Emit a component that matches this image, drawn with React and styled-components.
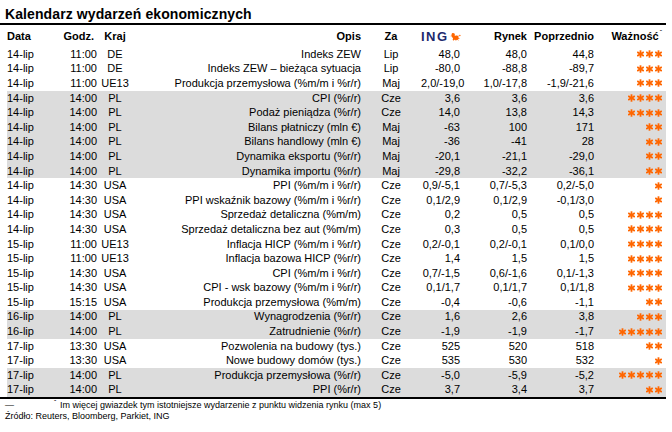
import React from "react";
import styled, { createGlobalStyle } from "styled-components";

const Global = createGlobalStyle`
  html, body { margin: 0; padding: 0; background: #ffffff; }
  body { font-family: "Liberation Sans", Arial, sans-serif; color: #000; }
`;

const Page = styled.div`
  width: 672px;
  height: 432px;
  overflow: hidden;
  background: #fff;
`;

const Title = styled.h1`
  margin: 0;
  padding: 6px 0 0 5px;
  height: 17px;
  font-size: 14px;
  line-height: 16px;
  font-weight: 700;
  letter-spacing: 0.1px;
`;

const Rule = styled.div`
  width: 666px;
  height: 2px;
  background: #000;
`;

const cols = "53px 37px 36px 228px 60px 39px 67px 67px 68px 4px";

const HeadRow = styled.div`
  display: grid;
  grid-template-columns: ${cols};
  align-items: end;
  margin-left: 7px;
  width: 659px;
  height: 22px;
  box-sizing: border-box;
  padding-bottom: 4px;
  font-size: 11px;
  line-height: 13px;
  font-weight: 700;
`;

const Row = styled.div`
  display: grid;
  grid-template-columns: ${cols};
  align-items: center;
  margin-left: 7px;
  width: 659px;
  height: 14.6px;
  font-size: 11px;
  line-height: 13px;
  background: ${(p) => (p.$shade ? "#dcdcdc" : "transparent")};
`;

const Cell = styled.div`
  text-align: ${(p) => p.$align || "left"};
  padding-right: ${(p) => p.$pr || 0}px;
  white-space: nowrap;
`;

const Logo = styled.div`
  display: flex;
  justify-content: flex-end;
  align-items: center;
  gap: 1px;
  margin-right: -1px;
  margin-bottom: 0px;
`;

const LogoText = styled.span`
  color: #1d2a6d;
  font-family: "Liberation Sans", Arial, sans-serif;
  font-size: 13px;
  line-height: 12px;
  font-weight: 700;
  letter-spacing: 1.5px;
`;

const Sup = styled.sup`
  font-size: 7px;
  font-weight: 400;
  vertical-align: top;
  line-height: 6px;
  margin-left: 1px;
`;

const Stars = styled.div`
  display: flex;
  justify-content: flex-end;
  gap: 2px;
`;

const Footer = styled.div`
  padding: 1px 0 0 5px;
  font-size: 9px;
  line-height: 10px;
`;

const FootLine = styled.div`
  display: flex;
  align-items: baseline;
`;

const Dash = styled.span`
  width: 49px;
`;

const Mark = styled.span`
  font-size: 7px;
  width: 6px;
  position: relative;
  top: -3px;
`;

const Star = () => (
  <svg width="7" height="8" viewBox="0 0 7 8">
    <g stroke="#ff6600" strokeWidth="1.8" strokeLinecap="butt">
      <line x1="3.5" y1="0.3" x2="3.5" y2="7.7" />
      <line x1="0.2" y1="2.1" x2="6.8" y2="5.9" />
      <line x1="0.2" y1="5.9" x2="6.8" y2="2.1" />
    </g>
  </svg>
);

const Lion = () => (
  <svg width="19" height="13" viewBox="0 0 18 12">
    <g fill="#ff6600">
      <path d="M3 1.2c1.2-.9 3-.9 4 .2.9 1 .8 2.3.2 3.1l1.6.4c1.3-.8 2.8-.6 3.5.2l1-.8.6 1-.9.9c.6.6.9 1.4.7 2.1l1.6.9-.5.8-1.6-.5-.4 1.7 1.2 1.3H13l-1.1-1.4-2.2.3.8 1.1H8.9l-.9-1.2-2.1.1.8 1.1H5.1l-.9-1.5.6-2.2C3.7 7.5 3 6.7 2.8 5.6L1.3 6l-.3-1 1.8-.7C2.4 3.3 2.3 2 3 1.2z" />
      <circle cx="15.6" cy="4.4" r="1.1" />
    </g>
  </svg>
);

const rows = [
  ["14-lip", "11:00", "DE", "Indeks ZEW", "Lip", "48,0", "48,0", "44,8", 3, false],
  ["14-lip", "11:00", "DE", "Indeks ZEW – bieżąca sytuacja", "Lip", "-80,0", "-88,8", "-89,7", 3, false],
  ["14-lip", "11:00", "UE13", "Produkcja przemysłowa (%m/m i %r/r)", "Maj", "2,0/-19,0", "1,0/-17,8", "-1,9/-21,6", 3, false],
  ["14-lip", "14:00", "PL", "CPI (%r/r)", "Cze", "3,6", "3,6", "3,6", 4, true],
  ["14-lip", "14:00", "PL", "Podaż pieniądza (%r/r)", "Cze", "14,0", "13,8", "14,3", 4, true],
  ["14-lip", "14:00", "PL", "Bilans płatniczy (mln €)", "Maj", "-63", "100", "171", 2, true],
  ["14-lip", "14:00", "PL", "Bilans handlowy (mln €)", "Maj", "-36", "-41", "28", 2, true],
  ["14-lip", "14:00", "PL", "Dynamika eksportu (%r/r)", "Maj", "-20,1", "-21,1", "-29,0", 2, true],
  ["14-lip", "14:00", "PL", "Dynamika importu (%r/r)", "Maj", "-29,8", "-32,2", "-36,1", 2, true],
  ["14-lip", "14:30", "USA", "PPI (%m/m i %r/r)", "Cze", "0,9/-5,1", "0,7/-5,3", "0,2/-5,0", 1, false],
  ["14-lip", "14:30", "USA", "PPI wskaźnik bazowy (%m/m i %r/r)", "Cze", "0,1/2,9", "0,1/2,9", "-0,1/3,0", 1, false],
  ["14-lip", "14:30", "USA", "Sprzedaż detaliczna (%m/m)", "Cze", "0,2", "0,5", "0,5", 4, false],
  ["14-lip", "14:30", "USA", "Sprzedaż detaliczna bez aut (%m/m)", "Cze", "0,3", "0,5", "0,5", 4, false],
  ["15-lip", "11:00", "UE13", "Inflacja HICP (%m/m i %r/r)", "Cze", "0,2/-0,1", "0,2/-0,1", "0,1/0,0", 4, false],
  ["15-lip", "11:00", "UE13", "Inflacja bazowa HICP (%r/r)", "Cze", "1,4", "1,5", "1,5", 4, false],
  ["15-lip", "14:30", "USA", "CPI (%m/m i %r/r)", "Cze", "0,7/-1,5", "0,6/-1,6", "0,1/-1,3", 4, false],
  ["15-lip", "14:30", "USA", "CPI -  wsk bazowy (%m/m i %r/r)", "Cze", "0,1/1,7", "0,1/1,7", "0,1/1,8", 4, false],
  ["15-lip", "15:15", "USA", "Produkcja przemysłowa (%m/m)", "Cze", "-0,4", "-0,6", "-1,1", 2, false],
  ["16-lip", "14:00", "PL", "Wynagrodzenia (%r/r)", "Cze", "1,6", "2,6", "3,8", 3, true],
  ["16-lip", "14:00", "PL", "Zatrudnienie (%r/r)", "Cze", "-1,9", "-1,9", "-1,7", 5, true],
  ["17-lip", "13:30", "USA", "Pozwolenia na budowy (tys.)", "Cze", "525", "520", "518", 2, false],
  ["17-lip", "13:30", "USA", "Nowe budowy domów (tys.)", "Cze", "535", "530", "532", 1, false],
  ["17-lip", "14:00", "PL", "Produkcja przemysłowa (%r/r)", "Cze", "-5,0", "-5,9", "-5,2", 5, true],
  ["17-lip", "14:00", "PL", "PPI (%r/r)", "Cze", "3,7", "3,4", "3,7", 2, true],
];

export default function App() {
  return (
    <Page>
      <Global />
      <Title>Kalendarz wydarzeń ekonomicznych</Title>
      <Rule />
      <HeadRow>
        <Cell>Data</Cell>
        <Cell $align="right" $pr={3}>Godz.</Cell>
        <Cell $align="center">Kraj</Cell>
        <Cell $align="right">Opis</Cell>
        <Cell $align="center">Za</Cell>
        <Logo>
          <LogoText>ING</LogoText>
          <Lion />
        </Logo>
        <Cell $align="right">Rynek</Cell>
        <Cell $align="right">Poprzednio</Cell>
        <Cell $align="right">
          Ważność<Sup>ˆ</Sup>
        </Cell>
        <Cell />
      </HeadRow>
      {rows.map((r, i) => (
        <Row key={i} $shade={r[9]}>
          <Cell>{r[0]}</Cell>
          <Cell $align="right">{r[1]}</Cell>
          <Cell $align="center">{r[2]}</Cell>
          <Cell $align="right">{r[3]}</Cell>
          <Cell $align="center">{r[4]}</Cell>
          <Cell $align="right">{r[5]}</Cell>
          <Cell $align="right">{r[6]}</Cell>
          <Cell $align="right">{r[7]}</Cell>
          <Stars>
            {Array.from({ length: r[8] }).map((_, k) => (
              <Star key={k} />
            ))}
          </Stars>
          <Cell />
        </Row>
      ))}
      <Rule />
      <Footer>
        <FootLine>
          <Dash>—</Dash>
          <Mark>ˆ</Mark>
          <span>Im więcej gwiazdek tym istotniejsze wydarzenie z punktu widzenia rynku (max 5)</span>
        </FootLine>
        <div>Źródło: Reuters, Bloomberg, Parkiet, ING</div>
      </Footer>
    </Page>
  );
}
